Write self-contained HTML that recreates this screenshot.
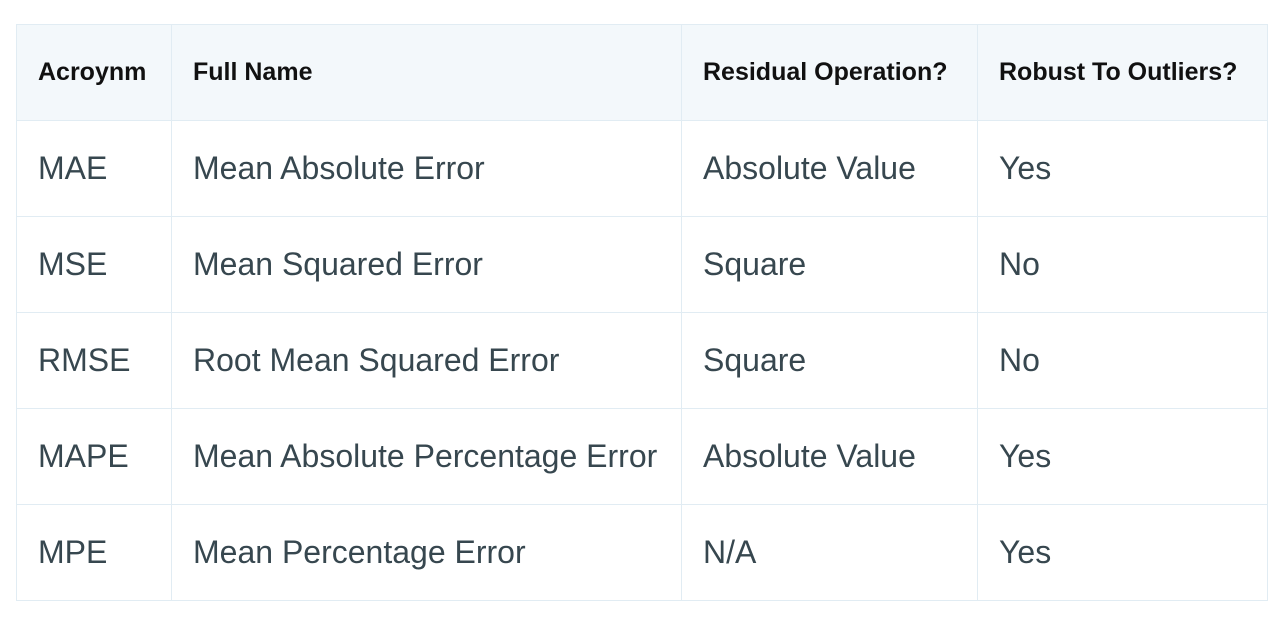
<!DOCTYPE html>
<html><head><meta charset="utf-8"><style>
html,body{margin:0;padding:0;background:#fff;width:1280px;height:622px;overflow:hidden}
table{position:absolute;left:16px;top:24px;border-collapse:collapse;font-family:"Liberation Sans",sans-serif;table-layout:fixed}
td,th{border:1.5px solid #e1ecf3;padding:0 0 0 21px;text-align:left;height:95px;white-space:nowrap}
th{background:#f3f8fb;font-weight:bold;font-size:25px;color:#111}
td{font-size:32px;color:#37474f}
</style></head><body>
<table>
<colgroup><col style="width:155px"><col style="width:510px"><col style="width:296px"><col style="width:290px"></colgroup>
<tr><th>Acroynm</th><th>Full Name</th><th>Residual Operation?</th><th>Robust To Outliers?</th></tr>
<tr><td>MAE</td><td>Mean Absolute Error</td><td>Absolute Value</td><td>Yes</td></tr>
<tr><td>MSE</td><td>Mean Squared Error</td><td>Square</td><td>No</td></tr>
<tr><td>RMSE</td><td>Root Mean Squared Error</td><td>Square</td><td>No</td></tr>
<tr><td>MAPE</td><td>Mean Absolute Percentage Error</td><td>Absolute Value</td><td>Yes</td></tr>
<tr><td>MPE</td><td>Mean Percentage Error</td><td>N/A</td><td>Yes</td></tr>
</table>
</body></html>
